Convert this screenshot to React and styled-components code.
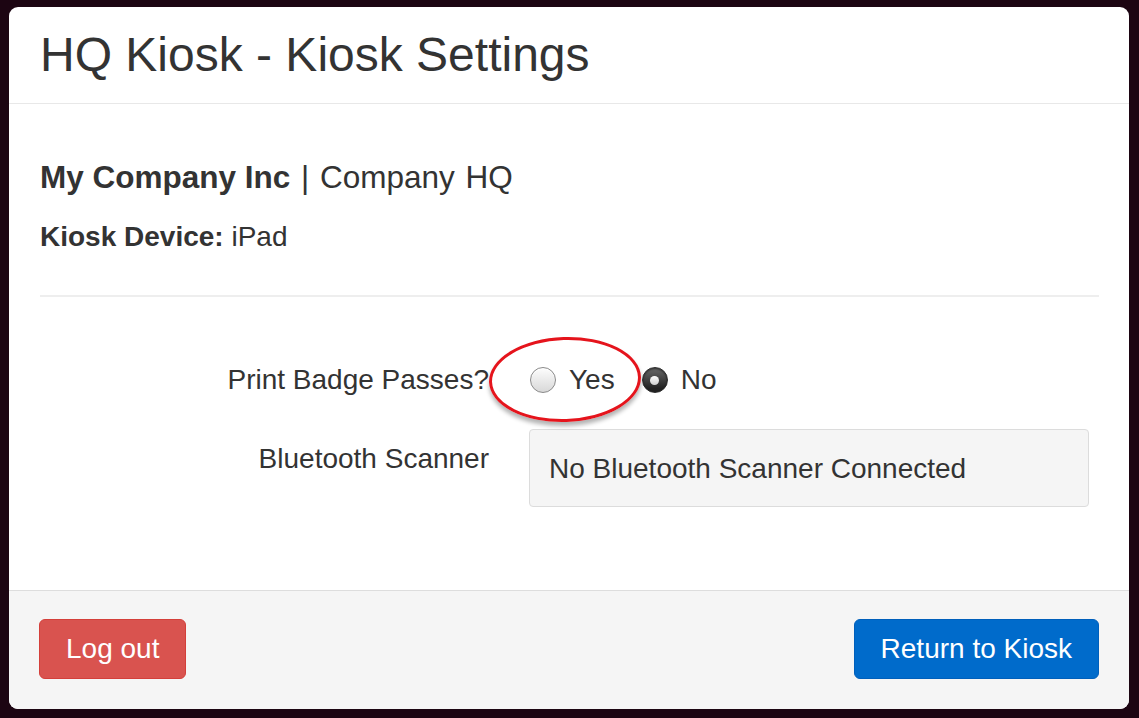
import React from 'react';
import styled, { createGlobalStyle } from 'styled-components';

const GlobalStyle = createGlobalStyle`
  html, body {
    margin: 0;
    padding: 0;
    background: #1c0512;
  }
  body {
    font-family: 'Liberation Sans', Arial, Helvetica, sans-serif;
    color: #333;
  }
`;

const Screen = styled.div`
  width: 1139px;
  height: 718px;
  box-sizing: border-box;
  padding: 7px 10px 9px 9px;
  background: #1c0512;
`;

const Modal = styled.div`
  width: 1120px;
  height: 702px;
  background: #fff;
  border-radius: 9px;
  overflow: hidden;
  display: flex;
  flex-direction: column;
`;

const Header = styled.div`
  height: 97px;
  box-sizing: border-box;
  border-bottom: 1px solid #e8e8e8;
  padding: 0 31px;
  display: flex;
  align-items: center;
`;

const Title = styled.h1`
  margin: 0;
  font-size: 48px;
  font-weight: 400;
  line-height: 1;
  color: #333;
`;

const Body = styled.div`
  flex: 1;
  padding: 53px 30px 0 31px;
`;

const CompanyLine = styled.div`
  font-size: 31.5px;
  line-height: 40px;
  height: 40px;
  word-spacing: 2px;
  b {
    font-weight: 700;
    word-spacing: 0;
  }
`;

const DeviceLine = styled.div`
  margin-top: 22px;
  font-size: 28px;
  line-height: 36px;
  b {
    font-weight: 700;
  }
`;

const Rule = styled.hr`
  margin: 40px 0 0;
  border: 0;
  border-top: 2px solid #eee;
`;

const Form = styled.div`
  margin-top: 63px;
  display: grid;
  grid-template-columns: 449px 560px;
  column-gap: 40px;
  row-gap: 29px;
  font-size: 28px;
`;

const Label = styled.div`
  text-align: right;
  line-height: 40px;
  padding-top: ${(p) => (p.$top ? p.$top : 0)}px;
`;

const RadioGroup = styled.div`
  display: flex;
  align-items: center;
  height: 40px;
  padding-left: 1px;
`;

const Option = styled.label`
  position: relative;
  display: flex;
  align-items: center;
  gap: 13px;
  margin-right: 27px;
  line-height: 40px;
`;

const RadioDot = styled.span`
  width: 26px;
  height: 26px;
  box-sizing: border-box;
  border-radius: 50%;
  display: flex;
  align-items: center;
  justify-content: center;
  border: 1.5px solid ${(p) => (p.$checked ? '#2a2a2a' : '#8a8a8a')};
  background: ${(p) =>
    p.$checked
      ? 'linear-gradient(to bottom, #6a6a6a, #222 85%)'
      : 'linear-gradient(to bottom, #fdfdfd, #d8d8d8)'};
  box-shadow: ${(p) =>
    p.$checked ? 'inset 0 1px 2px rgba(0,0,0,0.5)' : 'inset 0 1px 1px #fff'};
  &::after {
    content: '';
    display: ${(p) => (p.$checked ? 'block' : 'none')};
    width: 9px;
    height: 9px;
    border-radius: 50%;
    background: linear-gradient(to bottom, #fff, #cfcfcf);
  }
`;

const Callout = styled.span`
  position: absolute;
  left: -41px;
  top: -23px;
  width: 146px;
  height: 79px;
  border: 3px solid #e5141c;
  border-radius: 50%;
  box-shadow: 0 4px 4px rgba(0, 0, 0, 0.3);
  pointer-events: none;
  transform: rotate(-2deg);
`;

const StatusBox = styled.div`
  height: 78px;
  box-sizing: border-box;
  background: #f5f5f5;
  border: 1px solid #dcdcdc;
  border-radius: 4px;
  padding: 2px 19px 0;
  display: flex;
  align-items: center;
  color: #333;
`;

const Footer = styled.div`
  height: 119px;
  box-sizing: border-box;
  border-top: 1px solid #dddddd;
  background: #f5f5f5;
  padding: 28px 30px 0 30px;
  display: flex;
  justify-content: space-between;
  align-items: flex-start;
`;

const Button = styled.button`
  height: 60px;
  padding: 0 26px;
  font-family: inherit;
  font-size: 28px;
  color: #fff;
  border-radius: 6px;
  border: 1px solid ${(p) => (p.$variant === 'danger' ? '#d43f3a' : '#005fbb')};
  background: ${(p) => (p.$variant === 'danger' ? '#d9534f' : '#006bcb')};
  cursor: pointer;
`;

export default function App() {
  return (
    <>
      <GlobalStyle />
      <Screen>
        <Modal>
          <Header>
            <Title>HQ Kiosk - Kiosk Settings</Title>
          </Header>
          <Body>
            <CompanyLine>
              <b>My Company Inc</b> | Company HQ
            </CompanyLine>
            <DeviceLine>
              <b>Kiosk Device:</b> iPad
            </DeviceLine>
            <Rule />
            <Form>
              <Label>Print Badge Passes?</Label>
              <RadioGroup>
                <Option>
                  <Callout />
                  <RadioDot />
                  Yes
                </Option>
                <Option>
                  <RadioDot $checked />
                  No
                </Option>
              </RadioGroup>
              <Label $top={10}>Bluetooth Scanner</Label>
              <StatusBox>No Bluetooth Scanner Connected</StatusBox>
            </Form>
          </Body>
          <Footer>
            <Button $variant="danger">Log out</Button>
            <Button $variant="primary">Return to Kiosk</Button>
          </Footer>
        </Modal>
      </Screen>
    </>
  );
}
